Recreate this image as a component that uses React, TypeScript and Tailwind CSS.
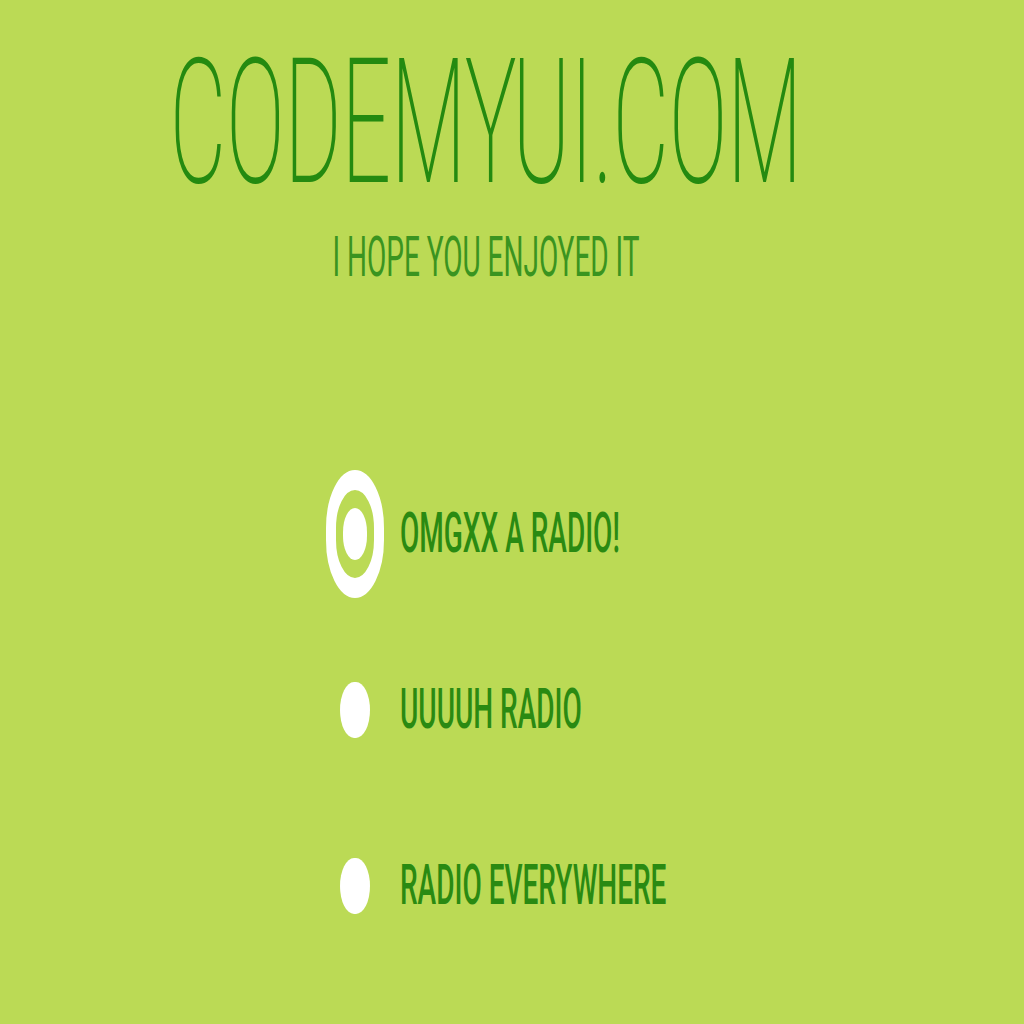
const options = [
  { label: "OMGXX A RADIO!", checked: true },
  { label: "UUUUH RADIO", checked: false },
  { label: "RADIO EVERYWHERE", checked: false },
];

function Radio({ checked }: { checked: boolean }) {
  if (checked) {
    return (
      <span className="flex h-[64px] w-[58px] items-center justify-center rounded-full border-[10px] border-white">
        <span className="h-[26px] w-[24px] rounded-full bg-white" />
      </span>
    );
  }
  return (
    <span className="flex h-[64px] w-[58px] items-center justify-center">
      <span className="h-[28px] w-[30px] rounded-full bg-white" />
    </span>
  );
}

export default function App() {
  return (
    <div className="min-h-screen overflow-hidden bg-[#bbda55]" style={{ fontFamily: "Roboto, 'Liberation Sans', sans-serif" }}>
      <div className="h-[512px] w-[972px] origin-top scale-y-200">
        <h1 className="pt-[18px] text-center text-[87px] font-extralight leading-none text-[#248a10]">
          CODEMYUI.COM
        </h1>
        <p className="mt-[10px] text-center text-[28px] font-normal leading-none text-[#3a9420]">I HOPE YOU ENJOYED IT</p>

        <ul className="ml-[326px] mt-[92px] flex flex-col gap-6">
          {options.map((o) => (
            <li key={o.label} className="flex h-[64px] items-center gap-4">
              <Radio checked={o.checked} />
              <span className="text-[28px] font-medium leading-none text-[#2a8a12]">{o.label}</span>
            </li>
          ))}
        </ul>
      </div>
    </div>
  );
}
